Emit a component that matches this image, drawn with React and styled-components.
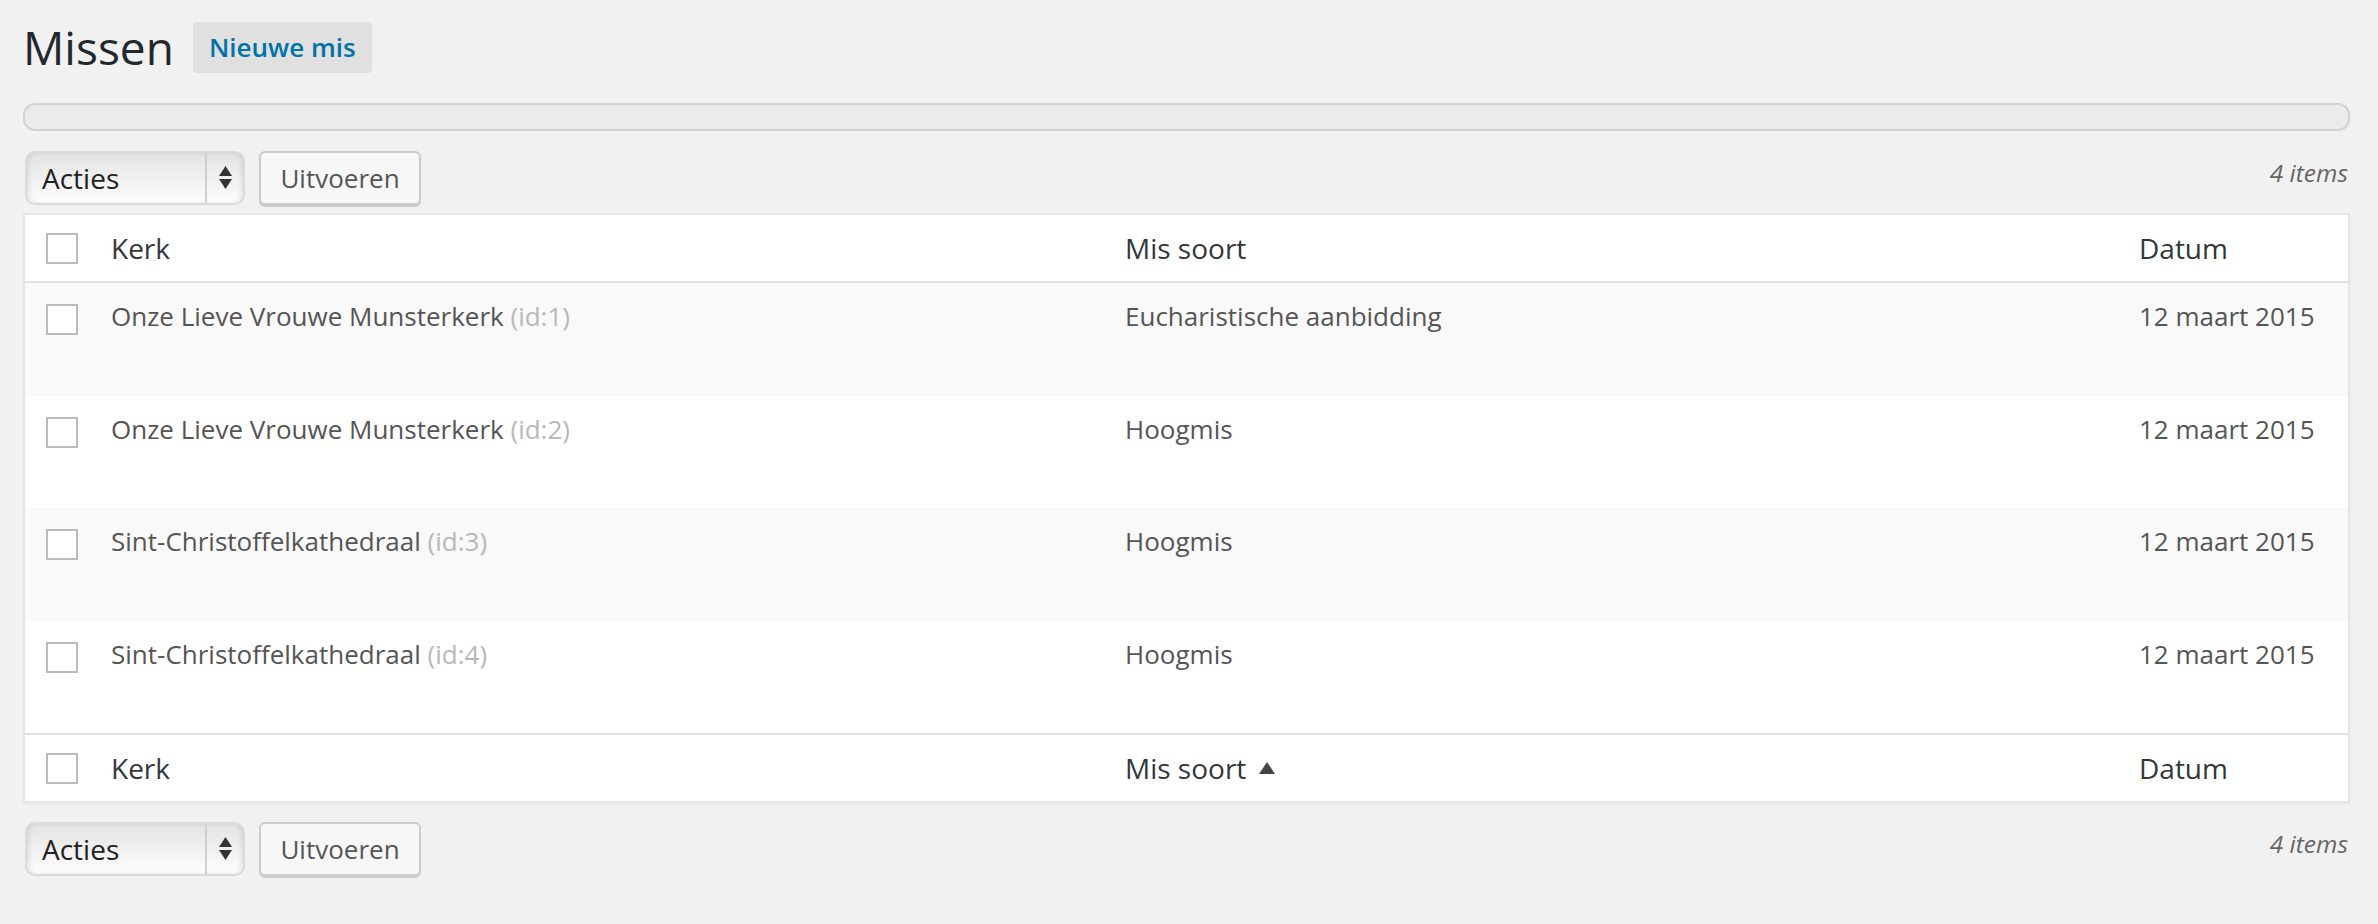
import React from 'react'
import styled, { createGlobalStyle } from 'styled-components'

const GlobalStyle = createGlobalStyle`
    html, body {
        margin: 0;
        padding: 0;
        background: #f1f1f1;
        font-family: "Open Sans", "Noto Sans", sans-serif;
        color: #444;
    }
`

const Wrap = styled.div`
    padding: 18px 28px 20px 23px;
`

const TitleRow = styled.div`
    display: flex;
    align-items: center;
    height: 58px;
`

const Title = styled.h1`
    margin: 0;
    font-size: 46px;
    font-weight: 400;
    line-height: 58px;
    color: #23282d;
`

const AddNew = styled.a`
    margin-left: 19px;
    height: 51px;
    padding: 0 16px;
    display: flex;
    align-items: center;
    background: #e0e0e0;
    border-radius: 4px;
    color: #0073aa;
    font-size: 26px;
    font-weight: 600;
    text-decoration: none;
`

const EmptyBar = styled.div`
    margin-top: 27px;
    height: 24px;
    border: 2px solid #d2d2d2;
    border-radius: 12px;
    background: #ebebeb;
`

const Toolbar = styled.div`
    display: flex;
    align-items: flex-start;
    height: 56px;
    margin-top: ${p => p.top}px;
    margin-bottom: ${p => p.bottom}px;
`

const SelectBox = styled.div`
    margin-left: 2px;
    width: 220px;
    height: 54px;
    box-sizing: border-box;
    display: flex;
    border: 2px solid #dadada;
    border-radius: 10px;
    background: linear-gradient(to bottom, #e3e3e3 0%, #efefef 45%, #fdfdfd 100%);
    box-shadow: inset 4px 0 6px -3px rgba(0, 0, 0, 0.12), inset -4px 0 6px -3px rgba(0, 0, 0, 0.12);
    overflow: hidden;
`

const SelectLabel = styled.div`
    flex: 1;
    display: flex;
    align-items: center;
    padding-left: 15px;
    font-size: 28px;
    color: #222;
`

const SelectArrows = styled.div`
    width: 36px;
    display: flex;
    align-items: center;
    justify-content: center;
    border-left: 2px solid #cfcfcf;
`

const Button = styled.div`
    margin-left: 14px;
    width: 162px;
    height: 54px;
    box-sizing: border-box;
    display: flex;
    align-items: center;
    justify-content: center;
    border: 2px solid #cccccc;
    border-radius: 6px;
    background: #f7f7f7;
    box-shadow: 0 2px 0 #cccccc;
    font-size: 26px;
    color: #555;
`

const Count = styled.div`
    margin-left: auto;
    margin-right: 2px;
    margin-top: 2px;
    font-size: 24.5px;
    line-height: 39px;
    font-style: italic;
    color: #666;
`

const Table = styled.div`
    border: 2px solid #e5e5e5;
    background: #fff;
    box-shadow: 0 2px 2px rgba(0, 0, 0, 0.04);
`

const Row = styled.div`
    display: grid;
    grid-template-columns: 66px 1fr 1fr 229px;
    height: ${p => p.h}px;
    background: ${p => p.alt ? '#f9f9f9' : '#fff'};
    border-top: ${p => p.bt ? '2px solid #e1e1e1' : 'none'};
    border-bottom: ${p => p.bb ? '2px solid #e1e1e1' : 'none'};
    align-items: ${p => p.head ? 'center' : 'start'};
`

const CheckCell = styled.div`
    padding-left: 21px;
    padding-top: ${p => p.head ? 0 : 21}px;
    display: flex;
`

const Checkbox = styled.span`
    width: 32px;
    height: 31px;
    box-sizing: border-box;
    border: 2px solid #bbbbbb;
    background: #fff;
`

const HeadCell = styled.div`
    padding-left: 20px;
    font-size: 28px;
    color: #32373c;
    display: flex;
    align-items: center;
`

const Cell = styled.div`
    padding: 14px 0 0 20px;
    font-size: 26px;
    line-height: 39px;
    color: #555;
`

const Muted = styled.span`
    color: #b8b8b8;
`

const SortArrow = styled.span`
    margin-left: 13px;
    width: 0;
    height: 0;
    border-left: 8px solid transparent;
    border-right: 8px solid transparent;
    border-bottom: 12px solid #444;
`

const arrows = (
    <svg width="13" height="24" viewBox="0 0 13 24">
        <polygon points="6.5,0 13,10 0,10" fill="#333" />
        <polygon points="0,13 13,13 6.5,23" fill="#333" />
    </svg>
)

const missen = [
    { kerk: 'Onze Lieve Vrouwe Munsterkerk', id: 1, soort: 'Eucharistische aanbidding', datum: '12 maart 2015' },
    { kerk: 'Onze Lieve Vrouwe Munsterkerk', id: 2, soort: 'Hoogmis', datum: '12 maart 2015' },
    { kerk: 'Sint-Christoffelkathedraal', id: 3, soort: 'Hoogmis', datum: '12 maart 2015' },
    { kerk: 'Sint-Christoffelkathedraal', id: 4, soort: 'Hoogmis', datum: '12 maart 2015' },
]

function Actions(props) {
    return (
        <Toolbar top={props.top} bottom={props.bottom}>
            <SelectBox>
                <SelectLabel>Acties</SelectLabel>
                <SelectArrows>{arrows}</SelectArrows>
            </SelectBox>
            <Button>Uitvoeren</Button>
            <Count>4 items</Count>
        </Toolbar>
    )
}

function HeaderRow(props) {
    return (
        <Row head h={66} bt={props.footer} bb={!props.footer}>
            <CheckCell head><Checkbox /></CheckCell>
            <HeadCell>Kerk</HeadCell>
            <HeadCell>Mis soort{props.footer && <SortArrow />}</HeadCell>
            <HeadCell>Datum</HeadCell>
        </Row>
    )
}

const App = () => (
    <Wrap>
        <GlobalStyle />
        <TitleRow>
            <Title>Missen</Title>
            <AddNew>Nieuwe mis</AddNew>
        </TitleRow>
        <EmptyBar />
        <Actions top={20} bottom={6} />
        <Table>
            <HeaderRow />
            {missen.map((mis, i) => (
                <Row key={mis.id} alt={i % 2 === 0} h={112.5}>
                    <CheckCell><Checkbox /></CheckCell>
                    <Cell>{mis.kerk} <Muted>(id:{mis.id})</Muted></Cell>
                    <Cell>{mis.soort}</Cell>
                    <Cell>{mis.datum}</Cell>
                </Row>
            ))}
            <HeaderRow footer />
        </Table>
        <Actions top={19} bottom={0} />
    </Wrap>
)

export default App
